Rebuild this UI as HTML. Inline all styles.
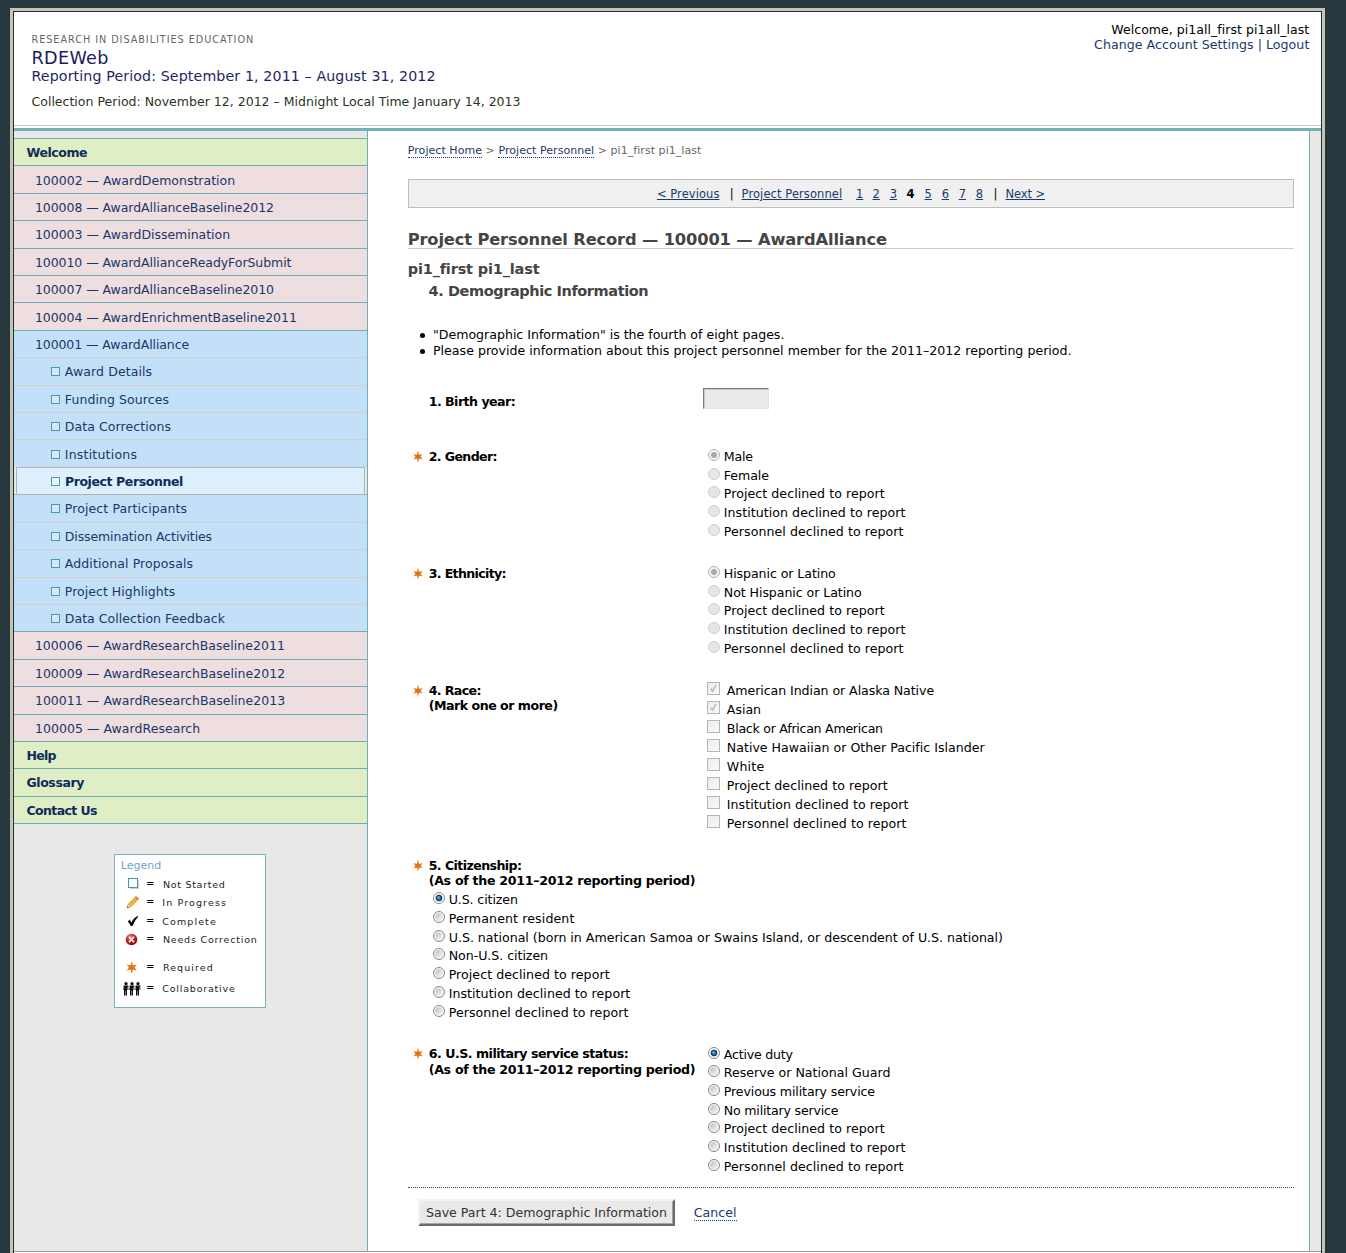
<!DOCTYPE html>
<html lang="en">
<head>
<meta charset="utf-8">
<title>RDEWeb - Project Personnel Record</title>
<style>
html,body{margin:0;padding:0;}
body{width:1346px;height:1253px;overflow:hidden;background:#26383e;font-family:"DejaVu Sans","Liberation Sans",sans-serif;font-size:12.6px;color:#000;position:relative;}
a{color:#1a3a6b;text-decoration:none;}
#frame{position:absolute;left:10px;top:8px;width:1309px;height:1300px;border:3px solid #c9c4b1;background:#1c3037;}
#page{position:absolute;left:1px;top:1px;width:1307px;height:1298px;background:#fff;overflow:hidden;}
#header{position:absolute;left:0;top:0;width:1307px;height:113px;border-bottom:1px solid #c9c9c9;background:#fff;}
#tealbar{position:absolute;left:0;top:116px;width:1307px;height:3px;background:#74b0b4;}
#sidebar{position:absolute;left:0;top:119px;width:353px;height:1120px;background:#e8e8e8;border-right:1px solid #6fafb3;}
#rightstrip{position:absolute;left:1295px;top:119px;width:12px;height:1120px;background:#e8e8e8;border-left:1px solid #6fafb3;box-sizing:border-box;}
#bottomline{position:absolute;left:0;top:1239px;width:1307px;height:1px;background:#999;}
.t{position:absolute;white-space:nowrap;line-height:1;}
#nav{list-style:none;margin:0;padding:0;position:absolute;left:0;top:7px;width:353px;}
#nav li{box-sizing:border-box;height:27.42px;border-top:1px solid #6fafb3;}
#nav li.g{background:#dfeec4;}
#nav li.p{background:#eedee0;}
#nav li.bl{background:#c4e0f8;}
#nav li.s{background:#c4e0f8;border-top-color:#d3cfc9;}
#nav li.sel{background:#def0fe;margin:0 2px 0 2px;border:1px solid #b3b3b3;border-bottom:none;}
#nav li.after{border-top-color:#b3b3b3;}
#nav li.last{border-bottom:1px solid #6fafb3;height:28.42px;}
.nt{color:#1a3668;}
.ng{color:#0f2b5c;font-weight:bold;}
.cb{position:absolute;box-sizing:border-box;width:9px;height:9px;border:1px solid #4f9c9c;background:rgba(255,255,255,0.25);}
#legend{position:absolute;left:100px;top:723px;width:150px;height:152px;border:1px solid #7ab3b6;background:#fff;}
#legend .r{color:#222;}
#legend svg{position:absolute;}
.lnk{color:#1a3a6b;border-bottom:1px dotted #1a3a6b;}
.ul{color:#1a3a6b;text-decoration:underline;}
.bd{font-weight:bold;}
.rd{position:absolute;box-sizing:border-box;width:12px;height:12px;border-radius:50%;}
.rd.dis{border:1px solid #cfcfcf;background:#e6e6e6;}
.rd.dis.on{border:1px solid #b4b4b4;background:radial-gradient(circle at 50% 50%,#a9a9a9 0,#a9a9a9 2.6px,#f4f4f4 3.4px,#f4f4f4 100%);}
.rd.en{border:1px solid #8a8b8b;background:radial-gradient(circle at 50% 50%,rgba(255,255,255,0) 3.3px,#f4f4f4 4.1px),linear-gradient(135deg,#b9b9b9 15%,#dcdcdc 50%,#f6f6f6 85%);}
.rd.en.on{border:1px solid #8a8b8b;background:radial-gradient(circle at 44% 42%,rgba(150,225,255,.95) 0,rgba(150,225,255,0) 1.4px),radial-gradient(circle at 50% 50%,#2f9fe0 0,#2a8fd0 1.1px,#14406e 2.3px,#14406e 2.9px,#f2f2f2 3.7px,#fff 5px);}
.ck{position:absolute;box-sizing:border-box;width:13px;height:13px;border:1px solid #b6b6b6;background:linear-gradient(135deg,#ededed,#f8f8f8);}
.ck svg{position:absolute;left:0;top:0;}
.ast{position:absolute;}
</style>
</head>
<body>
<div id="frame"><div id="page">
<div id="header">
<div class="t" style="left:17.50px;top:23px;font-size:9.7px;letter-spacing:0.948px;color:#666;">RESEARCH IN DISABILITIES EDUCATION</div>
<div class="t" style="left:17.50px;top:38px;font-size:17.6px;letter-spacing:0.330px;color:#1a1a5e;">RDEWeb</div>
<div class="t" style="left:17.50px;top:57px;font-size:14.2px;letter-spacing:0.124px;color:#1f1f66;">Reporting Period: September 1, 2011 – August 31, 2012</div>
<div class="t" style="left:17.50px;top:84px;font-size:12.5px;letter-spacing:0.012px;color:#26361a;">Collection Period: November 12, 2012 – Midnight Local Time January 14, 2013</div>
<div class="t" style="left:1097.30px;top:12px;font-size:12.5px;letter-spacing:0.046px;">Welcome, pi1all_first pi1all_last</div>
<div class="t" style="left:1080.10px;top:27px;font-size:12.6px;letter-spacing:0.036px;color:#1a3a6b;"><a>Change Account Settings</a> | <a>Logout</a></div>
</div>
<div id="tealbar"></div>
<div id="sidebar">
<ul id="nav">
  <li class="g"><div class="t ng" style="left:12.50px;top:9px;font-size:12.5px;letter-spacing:-0.418px;">Welcome</div></li>
  <li class="p"><div class="t nt" style="left:20.90px;top:37px;font-size:12.5px;letter-spacing:0.001px;">100002 — AwardDemonstration</div></li>
  <li class="p"><div class="t nt" style="left:20.90px;top:64px;font-size:12.5px;letter-spacing:-0.051px;">100008 — AwardAllianceBaseline2012</div></li>
  <li class="p"><div class="t nt" style="left:20.90px;top:91px;font-size:12.5px;letter-spacing:-0.028px;">100003 — AwardDissemination</div></li>
  <li class="p"><div class="t nt" style="left:20.90px;top:119px;font-size:12.5px;letter-spacing:-0.061px;">100010 — AwardAllianceReadyForSubmit</div></li>
  <li class="p"><div class="t nt" style="left:20.90px;top:146px;font-size:12.5px;letter-spacing:-0.051px;">100007 — AwardAllianceBaseline2010</div></li>
  <li class="p"><div class="t nt" style="left:20.90px;top:174px;font-size:12.5px;letter-spacing:-0.048px;">100004 — AwardEnrichmentBaseline2011</div></li>
  <li class="bl"><div class="t nt" style="left:20.90px;top:201px;font-size:12.5px;letter-spacing:-0.084px;">100001 — AwardAlliance</div></li>
  <li class="s"><span class="cb" style="left:37px;top:229px"></span><div class="t nt" style="left:50.80px;top:228px;font-size:12.5px;letter-spacing:0.101px;">Award Details</div></li>
  <li class="s"><span class="cb" style="left:37px;top:257px"></span><div class="t nt" style="left:50.80px;top:256px;font-size:12.5px;letter-spacing:0.082px;">Funding Sources</div></li>
  <li class="s"><span class="cb" style="left:37px;top:284px"></span><div class="t nt" style="left:50.80px;top:283px;font-size:12.5px;letter-spacing:0.087px;">Data Corrections</div></li>
  <li class="s"><span class="cb" style="left:37px;top:312px"></span><div class="t nt" style="left:50.80px;top:311px;font-size:12.5px;letter-spacing:0.211px;">Institutions</div></li>
  <li class="s sel"><span class="cb" style="left:37px;top:339px"></span><div class="t ng" style="left:50.90px;top:338px;font-size:12.5px;letter-spacing:-0.401px;">Project Personnel</div></li>
  <li class="s after"><span class="cb" style="left:37px;top:366px"></span><div class="t nt" style="left:50.80px;top:365px;font-size:12.5px;letter-spacing:0.112px;">Project Participants</div></li>
  <li class="s"><span class="cb" style="left:37px;top:394px"></span><div class="t nt" style="left:50.80px;top:393px;font-size:12.5px;letter-spacing:-0.117px;">Dissemination Activities</div></li>
  <li class="s"><span class="cb" style="left:37px;top:421px"></span><div class="t nt" style="left:50.80px;top:420px;font-size:12.5px;letter-spacing:0.105px;">Additional Proposals</div></li>
  <li class="s"><span class="cb" style="left:37px;top:449px"></span><div class="t nt" style="left:50.80px;top:448px;font-size:12.5px;letter-spacing:0.042px;">Project Highlights</div></li>
  <li class="s"><span class="cb" style="left:37px;top:476px"></span><div class="t nt" style="left:50.80px;top:475px;font-size:12.5px;letter-spacing:0.041px;">Data Collection Feedback</div></li>
  <li class="p"><div class="t nt" style="left:20.90px;top:502px;font-size:12.5px;letter-spacing:0.027px;">100006 — AwardResearchBaseline2011</div></li>
  <li class="p"><div class="t nt" style="left:20.90px;top:530px;font-size:12.5px;letter-spacing:0.037px;">100009 — AwardResearchBaseline2012</div></li>
  <li class="p"><div class="t nt" style="left:20.90px;top:557px;font-size:12.5px;letter-spacing:0.037px;">100011 — AwardResearchBaseline2013</div></li>
  <li class="p"><div class="t nt" style="left:20.90px;top:585px;font-size:12.5px;letter-spacing:0.048px;">100005 — AwardResearch</div></li>
  <li class="g"><div class="t ng" style="left:12.50px;top:612px;font-size:12.5px;letter-spacing:-0.757px;">Help</div></li>
  <li class="g"><div class="t ng" style="left:12.50px;top:639px;font-size:12.5px;letter-spacing:-0.424px;">Glossary</div></li>
  <li class="g last"><div class="t ng" style="left:12.50px;top:667px;font-size:12.5px;letter-spacing:-0.612px;">Contact Us</div></li>
</ul>

<div id="legend">
<div class="t" style="left:5.80px;top:5px;font-size:11px;letter-spacing:0.016px;color:#6aa5cc;">Legend</div>
<div class="t r" style="left:31.10px;top:24px;font-size:10px;color:#000;">=</div>
<div class="t r" style="left:47.90px;top:25px;font-size:9.5px;letter-spacing:0.715px;">Not Started</div>
<div class="t r" style="left:31.10px;top:42px;font-size:10px;color:#000;">=</div>
<div class="t r" style="left:47.20px;top:43px;font-size:9.5px;letter-spacing:1.141px;">In Progress</div>
<div class="t r" style="left:31.10px;top:61px;font-size:10px;color:#000;">=</div>
<div class="t r" style="left:47.30px;top:62px;font-size:9.5px;letter-spacing:1.100px;">Complete</div>
<div class="t r" style="left:31.10px;top:79px;font-size:10px;color:#000;">=</div>
<div class="t r" style="left:47.90px;top:80px;font-size:9.5px;letter-spacing:0.796px;">Needs Correction</div>
<div class="t r" style="left:31.10px;top:107px;font-size:10px;color:#000;">=</div>
<div class="t r" style="left:47.90px;top:108px;font-size:9.5px;letter-spacing:1.072px;">Required</div>
<div class="t r" style="left:31.10px;top:128px;font-size:10px;color:#000;">=</div>
<div class="t r" style="left:47.30px;top:129px;font-size:9.5px;letter-spacing:0.796px;">Collaborative</div>
<svg style="left:13px;top:23px" width="12" height="12" viewBox="0 0 12 12"><rect x="2" y="2" width="9" height="9" fill="#d0d0d0"/><rect x="0.5" y="0.5" width="9" height="9" fill="#fff" stroke="#4a93b5"/></svg>
<svg style="left:10px;top:40px" width="15" height="15" viewBox="0 0 15 15"><path d="M2 13 L3.2 9.2 L11 1.4 L13.6 4 L5.8 11.8 Z" fill="#f2b233" stroke="#b9791a" stroke-width="0.6"/><path d="M2 13 L3.2 9.2 L5.8 11.8 Z" fill="#e9cfa6"/><path d="M2 13 L2.6 11.2 L3.8 12.4 Z" fill="#444"/><path d="M11 1.4 L13.6 4 L12.6 5 L10 2.4 Z" fill="#e46a5a"/></svg>
<svg style="left:12px;top:60px" width="12" height="12" viewBox="0 0 12 12"><path d="M0.8 6.2 L2.8 4.8 L4.4 7.4 C5.6 4.6 7.6 2.4 10.6 0.9 L11.2 1.9 C8.8 4 7.2 7 5.8 10.8 L3.8 11 Z" fill="#0a0a0a"/></svg>
<svg style="left:10px;top:78px" width="13" height="13" viewBox="0 0 13 13"><defs><radialGradient id="rg" cx="40%" cy="30%" r="70%"><stop offset="0" stop-color="#f08a8a"/><stop offset="0.5" stop-color="#d01f1f"/><stop offset="1" stop-color="#7a0c0c"/></radialGradient></defs><circle cx="6.5" cy="6.5" r="5.8" fill="url(#rg)"/><path d="M4.4 4.4 L8.6 8.6 M8.6 4.4 L4.4 8.6" stroke="#fff" stroke-width="1.6" stroke-linecap="round"/></svg>
<svg style="left:10.799999999999997px;top:106px" width="11.5" height="13" viewBox="0 0 10 11.4"><path d="M5.00 0.10 L6.00 3.97 L9.42 3.15 L7.50 5.70 L9.42 8.25 L6.00 7.43 L5.00 11.30 L4.00 7.43 L0.58 8.25 L2.50 5.70 L0.58 3.15 L4.00 3.97 Z" fill="#e2730f"/></svg>
<svg style="left:8px;top:127px" width="18" height="14" viewBox="0 0 18 14" fill="#111"><circle cx="3" cy="1.7" r="1.6"/><path d="M1.2 3.5 h4.6 v4.6 h-0.9 v-3 h-0.4 v8.4 h-1.3 v-4.6 h-0.4 v4.6 h-1.3 v-8.4 h-0.4 v3 h-0.9 Z" transform="translate(-0.5,0)"/><circle cx="9" cy="1.7" r="1.6"/><path d="M7.2 3.5 h4.6 v4.6 h-0.9 v-3 h-0.4 v8.4 h-1.3 v-4.6 h-0.4 v4.6 h-1.3 v-8.4 h-0.4 v3 h-0.9 Z" transform="translate(-0.5,0)"/><circle cx="15" cy="1.7" r="1.6"/><path d="M13.2 3.5 h4.6 v4.6 h-0.9 v-3 h-0.4 v8.4 h-1.3 v-4.6 h-0.4 v4.6 h-1.3 v-8.4 h-0.4 v3 h-0.9 Z" transform="translate(-0.5,0)"/></svg>
</div>
</div>
<div id="rightstrip"></div>
<div id="bottomline"></div>
<div id="content">
<div class="t" style="left:393.80px;top:133px;font-size:11px;letter-spacing:0.051px;color:#555;"><span class="lnk">Project Home</span> <span style="color:#666">&gt;</span> <span class="lnk">Project Personnel</span> <span style="color:#666">&gt; pi1_first pi1_last</span></div>
<div style="position:absolute;box-sizing:border-box;left:394px;top:167px;width:886px;height:29px;border:1px solid #bdbdbd;background:#f0f0f0;"><div class="t ul" style="left:247.90px;top:9px;font-size:11.5px;letter-spacing:0.066px;">&lt; Previous</div><div class="t" style="left:320.70px;top:9px;font-size:11.5px;">|</div><div class="t ul" style="left:332.60px;top:9px;font-size:11.5px;letter-spacing:0.086px;">Project Personnel</div><div class="t ul" style="left:447.00px;top:9px;font-size:11.5px;">1</div><div class="t ul" style="left:463.50px;top:9px;font-size:11.5px;">2</div><div class="t ul" style="left:480.70px;top:9px;font-size:11.5px;">3</div><div class="t bd" style="left:497.50px;top:9px;font-size:11.5px;">4</div><div class="t ul" style="left:515.50px;top:9px;font-size:11.5px;">5</div><div class="t ul" style="left:532.70px;top:9px;font-size:11.5px;">6</div><div class="t ul" style="left:549.70px;top:9px;font-size:11.5px;">7</div><div class="t ul" style="left:566.70px;top:9px;font-size:11.5px;">8</div><div class="t" style="left:584.50px;top:9px;font-size:11.5px;">|</div><div class="t ul" style="left:596.50px;top:9px;font-size:11.5px;letter-spacing:-0.099px;">Next &gt;</div></div>
<div class="t" style="left:393.70px;top:220px;font-size:16.3px;letter-spacing:-0.147px;font-weight:bold;color:#444;">Project Personnel Record — 100001 — AwardAlliance</div>
<div style="position:absolute;left:394px;top:236px;width:886px;height:1px;background:#ccc;"></div>
<div class="t" style="left:393.70px;top:250px;font-size:14.5px;letter-spacing:-0.165px;font-weight:bold;color:#444;">pi1_first pi1_last</div>
<div class="t" style="left:414.50px;top:272px;font-size:14.5px;letter-spacing:-0.414px;font-weight:bold;color:#444;">4. Demographic Information</div>
<div style="position:absolute;left:406px;top:321px;width:5px;height:5px;border-radius:50%;background:#000;"></div>
<div class="t" style="left:419.00px;top:317px;font-size:12.6px;letter-spacing:-0.020px;">"Demographic Information" is the fourth of eight pages.</div>
<div style="position:absolute;left:406px;top:337px;width:5px;height:5px;border-radius:50%;background:#000;"></div>
<div class="t" style="left:419.00px;top:333px;font-size:12.6px;letter-spacing:0.006px;">Please provide information about this project personnel member for the 2011–2012 reporting period.</div>
<div class="t" style="left:414.70px;top:384px;font-size:12.6px;letter-spacing:-0.526px;font-weight:bold;">1. Birth year:</div>
<div style="position:absolute;box-sizing:border-box;left:689px;top:376px;width:66px;height:21px;background:#ebebeb;border:1px solid;border-color:#7b7b7b #e3e3e3 #e3e3e3 #7b7b7b;box-shadow:inset 1px 1px 0 #c8c8c8;"></div>
<svg class="ast" style="left:399.1px;top:438.7px" width="10" height="12" viewBox="0 0 10 12"><path d="M5.00 0.10 L6.00 3.97 L9.42 3.15 L7.50 5.70 L9.42 8.25 L6.00 7.43 L5.00 11.30 L4.00 7.43 L0.58 8.25 L2.50 5.70 L0.58 3.15 L4.00 3.97 Z" fill="#e2730f" stroke="#e2730f" stroke-width="0.15" stroke-linejoin="round"/></svg>
<div class="t" style="left:414.70px;top:439px;font-size:12.6px;letter-spacing:-0.633px;font-weight:bold;">2. Gender:</div>
<span class="rd dis on" style="left:694px;top:437px"></span>
<div class="t" style="left:709.80px;top:439px;font-size:12.6px;letter-spacing:-0.181px;">Male</div>
<span class="rd dis" style="left:694px;top:456px"></span>
<div class="t" style="left:709.80px;top:458px;font-size:12.6px;letter-spacing:-0.069px;">Female</div>
<span class="rd dis" style="left:694px;top:474px"></span>
<div class="t" style="left:709.80px;top:476px;font-size:12.6px;letter-spacing:0.052px;">Project declined to report</div>
<span class="rd dis" style="left:694px;top:493px"></span>
<div class="t" style="left:709.80px;top:495px;font-size:12.6px;letter-spacing:0.047px;">Institution declined to report</div>
<span class="rd dis" style="left:694px;top:512px"></span>
<div class="t" style="left:709.80px;top:514px;font-size:12.6px;letter-spacing:0.061px;">Personnel declined to report</div>
<svg class="ast" style="left:399.1px;top:555.7px" width="10" height="12" viewBox="0 0 10 12"><path d="M5.00 0.10 L6.00 3.97 L9.42 3.15 L7.50 5.70 L9.42 8.25 L6.00 7.43 L5.00 11.30 L4.00 7.43 L0.58 8.25 L2.50 5.70 L0.58 3.15 L4.00 3.97 Z" fill="#e2730f" stroke="#e2730f" stroke-width="0.15" stroke-linejoin="round"/></svg>
<div class="t" style="left:414.70px;top:556px;font-size:12.6px;letter-spacing:-0.663px;font-weight:bold;">3. Ethnicity:</div>
<span class="rd dis on" style="left:694px;top:554px"></span>
<div class="t" style="left:709.80px;top:556px;font-size:12.6px;letter-spacing:-0.083px;">Hispanic or Latino</div>
<span class="rd dis" style="left:694px;top:573px"></span>
<div class="t" style="left:709.80px;top:575px;font-size:12.6px;letter-spacing:-0.075px;">Not Hispanic or Latino</div>
<span class="rd dis" style="left:694px;top:591px"></span>
<div class="t" style="left:709.80px;top:593px;font-size:12.6px;letter-spacing:0.052px;">Project declined to report</div>
<span class="rd dis" style="left:694px;top:610px"></span>
<div class="t" style="left:709.80px;top:612px;font-size:12.6px;letter-spacing:0.047px;">Institution declined to report</div>
<span class="rd dis" style="left:694px;top:629px"></span>
<div class="t" style="left:709.80px;top:631px;font-size:12.6px;letter-spacing:0.061px;">Personnel declined to report</div>
<svg class="ast" style="left:399.1px;top:672.7px" width="10" height="12" viewBox="0 0 10 12"><path d="M5.00 0.10 L6.00 3.97 L9.42 3.15 L7.50 5.70 L9.42 8.25 L6.00 7.43 L5.00 11.30 L4.00 7.43 L0.58 8.25 L2.50 5.70 L0.58 3.15 L4.00 3.97 Z" fill="#e2730f" stroke="#e2730f" stroke-width="0.15" stroke-linejoin="round"/></svg>
<div class="t" style="left:414.70px;top:673px;font-size:12.6px;letter-spacing:-0.625px;font-weight:bold;">4. Race:</div>
<div class="t" style="left:414.70px;top:688px;font-size:12.6px;letter-spacing:-0.491px;font-weight:bold;">(Mark one or more)</div>
<span class="ck" style="left:693px;top:670px"><svg width="11" height="11" viewBox="0 0 11 11"><path d="M2.6 5.6 L4.6 8.2 L8 2" fill="none" stroke="#b9b9b9" stroke-width="1.5"/></svg></span>
<div class="t" style="left:712.80px;top:673px;font-size:12.6px;letter-spacing:-0.074px;">American Indian or Alaska Native</div>
<span class="ck" style="left:693px;top:689px"><svg width="11" height="11" viewBox="0 0 11 11"><path d="M2.6 5.6 L4.6 8.2 L8 2" fill="none" stroke="#b9b9b9" stroke-width="1.5"/></svg></span>
<div class="t" style="left:712.80px;top:692px;font-size:12.6px;letter-spacing:-0.019px;">Asian</div>
<span class="ck" style="left:693px;top:708px"></span>
<div class="t" style="left:712.80px;top:711px;font-size:12.6px;letter-spacing:-0.271px;">Black or African American</div>
<span class="ck" style="left:693px;top:727px"></span>
<div class="t" style="left:712.80px;top:730px;font-size:12.6px;letter-spacing:0.001px;">Native Hawaiian or Other Pacific Islander</div>
<span class="ck" style="left:693px;top:746px"></span>
<div class="t" style="left:712.80px;top:749px;font-size:12.6px;letter-spacing:0.194px;">White</div>
<span class="ck" style="left:693px;top:765px"></span>
<div class="t" style="left:712.80px;top:768px;font-size:12.6px;letter-spacing:0.052px;">Project declined to report</div>
<span class="ck" style="left:693px;top:784px"></span>
<div class="t" style="left:712.80px;top:787px;font-size:12.6px;letter-spacing:0.047px;">Institution declined to report</div>
<span class="ck" style="left:693px;top:803px"></span>
<div class="t" style="left:712.80px;top:806px;font-size:12.6px;letter-spacing:0.061px;">Personnel declined to report</div>
<svg class="ast" style="left:399.1px;top:847.7px" width="10" height="12" viewBox="0 0 10 12"><path d="M5.00 0.10 L6.00 3.97 L9.42 3.15 L7.50 5.70 L9.42 8.25 L6.00 7.43 L5.00 11.30 L4.00 7.43 L0.58 8.25 L2.50 5.70 L0.58 3.15 L4.00 3.97 Z" fill="#e2730f" stroke="#e2730f" stroke-width="0.15" stroke-linejoin="round"/></svg>
<div class="t" style="left:414.70px;top:848px;font-size:12.6px;letter-spacing:-0.579px;font-weight:bold;">5. Citizenship:</div>
<div class="t" style="left:414.70px;top:863px;font-size:12.6px;letter-spacing:-0.287px;font-weight:bold;">(As of the 2011–2012 reporting period)</div>
<span class="rd en on" style="left:419px;top:880px"></span>
<div class="t" style="left:434.70px;top:882px;font-size:12.6px;letter-spacing:-0.111px;">U.S. citizen</div>
<span class="rd en" style="left:419px;top:899px"></span>
<div class="t" style="left:434.70px;top:901px;font-size:12.6px;letter-spacing:0.108px;">Permanent resident</div>
<span class="rd en" style="left:419px;top:918px"></span>
<div class="t" style="left:434.70px;top:920px;font-size:12.6px;letter-spacing:-0.007px;">U.S. national (born in American Samoa or Swains Island, or descendent of U.S. national)</div>
<span class="rd en" style="left:419px;top:936px"></span>
<div class="t" style="left:434.70px;top:938px;font-size:12.6px;letter-spacing:-0.045px;">Non-U.S. citizen</div>
<span class="rd en" style="left:419px;top:955px"></span>
<div class="t" style="left:434.70px;top:957px;font-size:12.6px;letter-spacing:0.052px;">Project declined to report</div>
<span class="rd en" style="left:419px;top:974px"></span>
<div class="t" style="left:434.70px;top:976px;font-size:12.6px;letter-spacing:0.047px;">Institution declined to report</div>
<span class="rd en" style="left:419px;top:993px"></span>
<div class="t" style="left:434.70px;top:995px;font-size:12.6px;letter-spacing:0.061px;">Personnel declined to report</div>
<svg class="ast" style="left:399.1px;top:1035.7px" width="10" height="12" viewBox="0 0 10 12"><path d="M5.00 0.10 L6.00 3.97 L9.42 3.15 L7.50 5.70 L9.42 8.25 L6.00 7.43 L5.00 11.30 L4.00 7.43 L0.58 8.25 L2.50 5.70 L0.58 3.15 L4.00 3.97 Z" fill="#e2730f" stroke="#e2730f" stroke-width="0.15" stroke-linejoin="round"/></svg>
<div class="t" style="left:414.70px;top:1036px;font-size:12.6px;letter-spacing:-0.490px;font-weight:bold;">6. U.S. military service status:</div>
<div class="t" style="left:414.70px;top:1052px;font-size:12.6px;letter-spacing:-0.287px;font-weight:bold;">(As of the 2011–2012 reporting period)</div>
<span class="rd en on" style="left:694px;top:1035px"></span>
<div class="t" style="left:709.80px;top:1037px;font-size:12.6px;letter-spacing:-0.223px;">Active duty</div>
<span class="rd en" style="left:694px;top:1053px"></span>
<div class="t" style="left:709.80px;top:1055px;font-size:12.6px;letter-spacing:0.008px;">Reserve or National Guard</div>
<span class="rd en" style="left:694px;top:1072px"></span>
<div class="t" style="left:709.80px;top:1074px;font-size:12.6px;letter-spacing:-0.129px;">Previous military service</div>
<span class="rd en" style="left:694px;top:1091px"></span>
<div class="t" style="left:709.80px;top:1093px;font-size:12.6px;letter-spacing:-0.205px;">No military service</div>
<span class="rd en" style="left:694px;top:1109px"></span>
<div class="t" style="left:709.80px;top:1111px;font-size:12.6px;letter-spacing:0.052px;">Project declined to report</div>
<span class="rd en" style="left:694px;top:1128px"></span>
<div class="t" style="left:709.80px;top:1130px;font-size:12.6px;letter-spacing:0.047px;">Institution declined to report</div>
<span class="rd en" style="left:694px;top:1147px"></span>
<div class="t" style="left:709.80px;top:1149px;font-size:12.6px;letter-spacing:0.061px;">Personnel declined to report</div>
<div style="position:absolute;left:394px;top:1175px;width:886px;height:0;border-top:1px dotted #444;"></div>
<div style="position:absolute;box-sizing:border-box;left:404px;top:1187px;width:257px;height:27px;background:#e9e9e9;border:2px solid;border-color:#f4f4f4 #6a6a6a #6a6a6a #f4f4f4;box-shadow:inset -1px -1px 0 #a5a5a5;"></div>
<div class="t" style="left:412.00px;top:1195px;font-size:12.6px;letter-spacing:-0.019px;color:#333;">Save Part 4: Demographic Information</div>
<div class="t" style="left:679.80px;top:1195px;font-size:12.6px;letter-spacing:0.006px;"><span class="lnk">Cancel</span></div>
</div>
</div></div>
</body>
</html>
